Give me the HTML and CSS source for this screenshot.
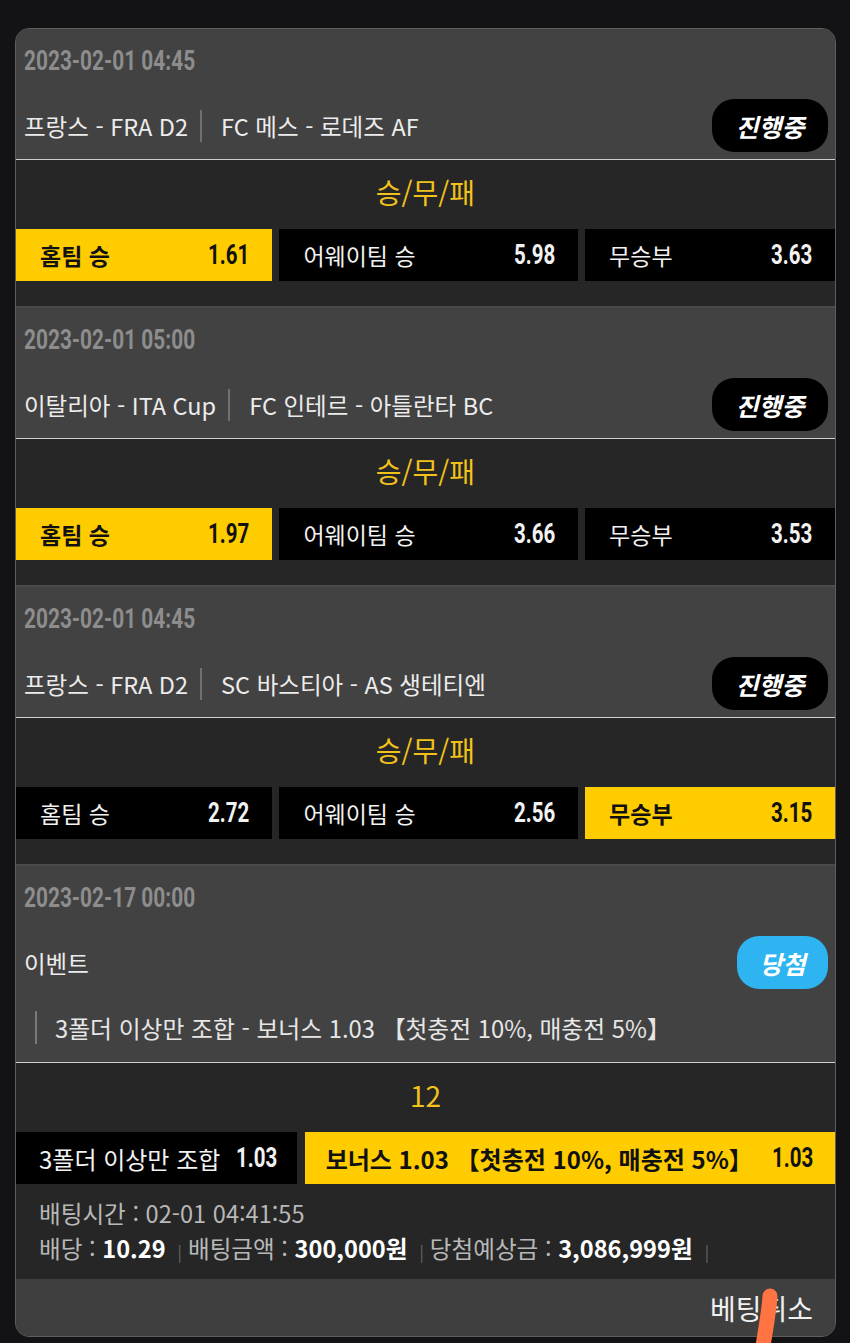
FILE: index.html
```html
<!DOCTYPE html>
<html lang="ko">
<head>
    <meta charset="UTF-8">
    <meta name="viewport" content="width=device-width, initial-scale=1.0">
    <title>베팅내역</title>
    <link rel="stylesheet" href="styles.css">
</head>
<body>
    <div class="bet-card">

        <div class="match">
            <div class="match-head">
                <div class="date"><span>2023-02-01 04:45</span></div>
                <div class="head-row">
                    <div class="teams"><span class="league">프랑스 - FRA D2</span><span class="vs">FC 메스 - 로데즈 AF</span></div>
                    <span class="badge live">진행중</span>
                </div>
            </div>
            <div class="market">
                <div class="market-title">승/무/패</div>
                <div class="odds-row">
                    <div class="pick selected"><span class="pick-label">홈팀 승</span><span class="pick-odds">1.61</span></div>
                    <div class="pick"><span class="pick-label">어웨이팀 승</span><span class="pick-odds">5.98</span></div>
                    <div class="pick"><span class="pick-label">무승부</span><span class="pick-odds">3.63</span></div>
                </div>
            </div>
        </div>

        <div class="match">
            <div class="match-head">
                <div class="date"><span>2023-02-01 05:00</span></div>
                <div class="head-row">
                    <div class="teams"><span class="league">이탈리아 - ITA Cup</span><span class="vs">FC 인테르 - 아틀란타 BC</span></div>
                    <span class="badge live">진행중</span>
                </div>
            </div>
            <div class="market">
                <div class="market-title">승/무/패</div>
                <div class="odds-row">
                    <div class="pick selected"><span class="pick-label">홈팀 승</span><span class="pick-odds">1.97</span></div>
                    <div class="pick"><span class="pick-label">어웨이팀 승</span><span class="pick-odds">3.66</span></div>
                    <div class="pick"><span class="pick-label">무승부</span><span class="pick-odds">3.53</span></div>
                </div>
            </div>
        </div>

        <div class="match">
            <div class="match-head">
                <div class="date"><span>2023-02-01 04:45</span></div>
                <div class="head-row">
                    <div class="teams"><span class="league">프랑스 - FRA D2</span><span class="vs">SC 바스티아 - AS 생테티엔</span></div>
                    <span class="badge live">진행중</span>
                </div>
            </div>
            <div class="market">
                <div class="market-title">승/무/패</div>
                <div class="odds-row">
                    <div class="pick"><span class="pick-label">홈팀 승</span><span class="pick-odds">2.72</span></div>
                    <div class="pick"><span class="pick-label">어웨이팀 승</span><span class="pick-odds">2.56</span></div>
                    <div class="pick selected"><span class="pick-label">무승부</span><span class="pick-odds">3.15</span></div>
                </div>
            </div>
        </div>

        <div class="match event">
            <div class="match-head">
                <div class="date"><span>2023-02-17 00:00</span></div>
                <div class="head-row">
                    <div class="teams">이벤트</div>
                    <span class="badge won">당첨</span>
                </div>
                <div class="event-desc">3폴더 이상만 조합 - 보너스 1.03 【첫충전 10%, 매충전 5%】</div>
            </div>
            <div class="market">
                <div class="market-title">12</div>
                <div class="odds-row">
                    <div class="pick compact"><span class="pick-label">3폴더 이상만 조합</span><span class="pick-odds">1.03</span></div>
                    <div class="pick selected wide"><span class="pick-label">보너스 1.03 【첫충전 10%, 매충전 5%】</span><span class="pick-odds">1.03</span></div>
                </div>
                <div class="bet-info">
                    <div>배팅시간 : 02-01 04:41:55</div>
                    <div>배당 : <b>10.29</b><span class="sep">|</span>배팅금액 : <b>300,000원</b><span class="sep">|</span>당첨예상금 : <b>3,086,999원</b><span class="sep">|</span></div>
                </div>
            </div>
        </div>

        <div class="card-foot">
            <span class="cancel">베팅취소</span>
        </div>

        <svg class="scribble" width="40" height="64" viewBox="0 0 40 64">
            <path d="M19 14 C18 30 15 45 12 64" stroke="#ff7442" stroke-width="15" stroke-linecap="round" fill="none"/>
        </svg>
    </div>
</body>
</html>
```

FILE: styles.css
```css
body {
    margin: 0;
    padding: 28px 14px 7px 15px;
    background-color: #131315;
    font-family: "Noto Sans CJK KR", "Noto Sans", sans-serif;
    color: #ececec;
}

.bet-card {
    position: relative;
    border: 1px solid #5e5e5e;
    border-radius: 14px;
    background-color: #262626;
}

.match-head {
    background-color: #424242;
    padding: 14px 7px 7px 8px;
}

.match:first-child .match-head {
    border-radius: 13px 13px 0 0;
}

.date {
    height: 36px;
    line-height: 36px;
    color: #8d8d8d;
}

.date span,
.pick-odds {
    display: inline-block;
    font-family: "Roboto", "Liberation Sans", sans-serif;
    font-weight: bold;
}

.date span {
    font-size: 28px;
    transform: scaleX(0.745);
    transform-origin: left center;
}

.head-row {
    margin-top: 20px;
    height: 53px;
    display: flex;
    align-items: center;
    justify-content: space-between;
}

.teams {
    font-size: 23.5px;
    display: flex;
    align-items: center;
}

.league {
    padding-right: 12px;
    border-right: 2px solid #707070;
    line-height: 32px;
}

.vs {
    padding-left: 19px;
}

.badge {
    height: 53px;
    border-radius: 22px;
    display: flex;
    align-items: center;
    justify-content: center;
    font-size: 25px;
    font-weight: bold;
    font-style: italic;
    color: #fff;
}

.badge.live {
    width: 116px;
    background-color: #000;
}

.badge.won {
    width: 91px;
    background-color: #2db4f1;
}

.market {
    border-top: 1px solid #cfcfcf;
    border-bottom: 2px solid #4a4a4a;
    padding-bottom: 25px;
}

.market-title {
    height: 64px;
    line-height: 64px;
    text-align: center;
    font-size: 28px;
    color: #f2c21b;
}

.odds-row {
    margin-top: 5px;
    display: flex;
    gap: 7px;
}

.pick {
    flex: 1 1 auto;
    height: 52px;
    padding: 0 23px 0 24px;
    display: flex;
    align-items: center;
    justify-content: space-between;
    background-color: #000;
    color: #f2f2f2;
    font-size: 23px;
}

.pick-odds {
    font-size: 27px;
    transform: scaleX(0.76);
    transform-origin: right center;
}

.pick.selected {
    background-color: #ffcc00;
    color: #111;
}

.pick.selected .pick-label {
    font-weight: bold;
}

.event-desc {
    margin: 22px 0 11px 11px;
    padding-left: 18px;
    border-left: 2px solid #7a7a7a;
    line-height: 33px;
    font-size: 23.8px;
    color: #e6e6e6;
}

.event .market {
    padding-bottom: 10px;
    border-bottom: none;
}

.event .odds-row {
    gap: 8px;
}

.pick.compact {
    flex: 0 0 auto;
    padding: 0 21px 0 23px;
    justify-content: flex-start;
    gap: 16px;
    font-size: 24px;
}

.pick.compact .pick-odds {
    transform-origin: left center;
    margin-right: -15px;
}

.pick.wide {
    flex: 1 1 auto;
    padding: 0 22px 0 21px;
    font-size: 24px;
}

.bet-info {
    margin-top: 12px;
    padding-left: 23px;
    font-size: 23.6px;
    line-height: 35px;
    color: #b8b8b8;
}

.bet-info b {
    color: #fff;
}

.sep {
    font-size: 16px;
    color: #666;
    margin: 0 6px 0 12px;
}

.card-foot {
    height: 57px;
    border-radius: 0 0 13px 13px;
    background-color: #3f3f3f;
    display: flex;
    align-items: center;
    justify-content: flex-end;
    padding-right: 22px;
}

.cancel {
    font-size: 28px;
    color: #f0f0f0;
}

.scribble {
    position: absolute;
    left: 735px;
    bottom: -10px;
}
```
